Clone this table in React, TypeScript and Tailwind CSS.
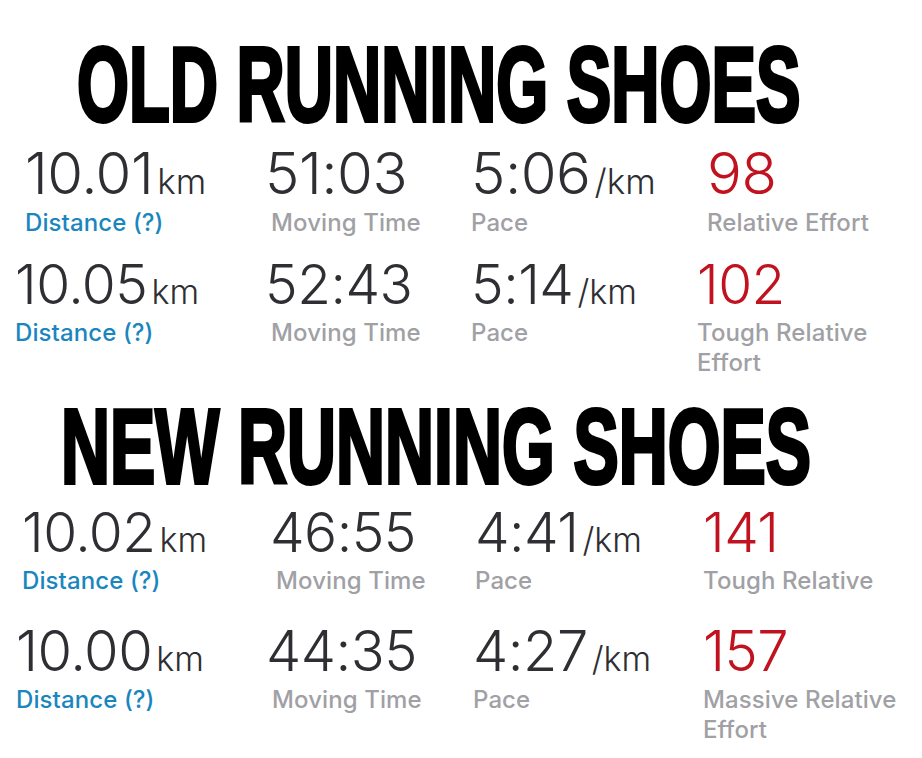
import React from "react";

type Stat = { value: string; unit?: string; label: string; kind: "dist" | "time" | "pace" | "effort" };

type Row = {
	rowClass: string;
	numClass: string;
	unitClass: string;
	cols: string[];
	stats: Stat[];
};

const labelBase = "mt-[6px] text-[24px] leading-[30px] font-medium tracking-[0.1px]";

const StatCell = ({ stat, col, numClass, unitClass }: { stat: Stat; col: string; numClass: string; unitClass: string }) => {
	const numColor = stat.kind === "effort" ? "text-[#c1121f]" : "text-[#2e2e33]";
	const labelColor = stat.kind === "dist" ? "text-[#1a86be]" : "text-[#a0a0a5]";
	return (
		<div className={`flex flex-col shrink-0 ${col}`}>
			<div className="flex items-baseline">
				<span className={`${numClass} ${numColor} leading-none font-light tracking-[-0.5px]`}>{stat.value}</span>
				{stat.unit && <span className={`${unitClass} text-[#2e2e33] leading-none font-light ml-[4px]`}>{stat.unit}</span>}
			</div>
			<div className={`${labelBase} ${labelColor} ${stat.kind === "time" ? "ml-[6px]" : ""} ${stat.kind === "effort" ? "w-[205px]" : ""}`}>
				{stat.label}
			</div>
		</div>
	);
};

const StatRow = ({ row }: { row: Row }) => (
	<div className={`flex items-start ${row.rowClass}`}>
		{row.stats.map((s, i) => (
			<StatCell key={i} stat={s} col={row.cols[i]} numClass={row.numClass} unitClass={row.unitClass} />
		))}
	</div>
);

const Heading = ({ text, cls, scale }: { text: string; cls: string; scale: string }) => (
	<div className={`h-[106px] whitespace-nowrap ${cls}`}>
		<span
			className={`inline-block origin-left ${scale} text-[106px] leading-none font-bold text-black [-webkit-text-stroke:4px_#000]`}
			style={{ fontFamily: '"Liberation Sans", Arial, sans-serif' }}
		>
			{text}
		</span>
	</div>
);

const rows: Row[] = [
	{
		rowClass: "mt-[7px] pl-[25px]",
		numClass: "text-[58px]",
		unitClass: "text-[35px]",
		cols: ["w-[240px]", "w-[206px]", "w-[236px]", "w-[205px]"],
		stats: [
			{ value: "10.01", unit: "km", label: "Distance (?)", kind: "dist" },
			{ value: "51:03", label: "Moving Time", kind: "time" },
			{ value: "5:06", unit: "/km", label: "Pace", kind: "pace" },
			{ value: "98", label: "Relative Effort", kind: "effort" },
		],
	},
	{
		rowClass: "mt-[19px] pl-[15px]",
		numClass: "text-[55px]",
		unitClass: "text-[34px]",
		cols: ["w-[250px]", "w-[206px]", "w-[226px]", "w-[205px]"],
		stats: [
			{ value: "10.05", unit: "km", label: "Distance (?)", kind: "dist" },
			{ value: "52:43", label: "Moving Time", kind: "time" },
			{ value: "5:14", unit: "/km", label: "Pace", kind: "pace" },
			{ value: "102", label: "Tough Relative Effort", kind: "effort" },
		],
	},
	{
		rowClass: "mt-[6px] pl-[22px]",
		numClass: "text-[55px]",
		unitClass: "text-[34px]",
		cols: ["w-[248px]", "w-[205px]", "w-[228px]", "w-[205px]"],
		stats: [
			{ value: "10.02", unit: "km", label: "Distance (?)", kind: "dist" },
			{ value: "46:55", label: "Moving Time", kind: "time" },
			{ value: "4:41", unit: "/km", label: "Pace", kind: "pace" },
			{ value: "141", label: "Tough Relative", kind: "effort" },
		],
	},
	{
		rowClass: "mt-[27px] pl-[16px]",
		numClass: "text-[56px]",
		unitClass: "text-[34px]",
		cols: ["w-[250px]", "w-[207px]", "w-[230px]", "w-[205px]"],
		stats: [
			{ value: "10.00", unit: "km", label: "Distance (?)", kind: "dist" },
			{ value: "44:35", label: "Moving Time", kind: "time" },
			{ value: "4:27", unit: "/km", label: "Pace", kind: "pace" },
			{ value: "157", label: "Massive Relative Effort", kind: "effort" },
		],
	},
];

export default function App() {
	return (
		<div
			className="w-[922px] h-[758px] bg-white overflow-hidden flex flex-col"
			style={{ fontFamily: "Inter, 'Noto Sans', sans-serif" }}
		>
			<Heading text="OLD RUNNING SHOES" cls="mt-[31px] pl-[77px]" scale="scale-x-[0.63]" />
			<StatRow row={rows[0]} />
			<StatRow row={rows[1]} />
			<Heading text="NEW RUNNING SHOES" cls="mt-[15px] pl-[61px]" scale="scale-x-[0.64]" />
			<StatRow row={rows[2]} />
			<StatRow row={rows[3]} />
		</div>
	);
}
